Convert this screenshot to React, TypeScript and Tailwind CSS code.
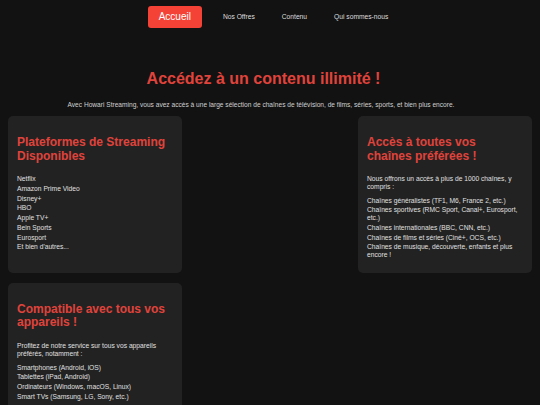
import React from 'react';

const platforms = [
  'Netflix',
  'Amazon Prime Video',
  'Disney+',
  'HBO',
  'Apple TV+',
  'Bein Sports',
  'Eurosport',
  "Et bien d'autres...",
];

const channels = [
  'Chaînes généralistes (TF1, M6, France 2, etc.)',
  'Chaînes sportives (RMC Sport, Canal+, Eurosport, etc.)',
  'Chaînes internationales (BBC, CNN, etc.)',
  'Chaînes de films et séries (Ciné+, OCS, etc.)',
  'Chaînes de musique, découverte, enfants et plus encore !',
];

const devices = [
  'Smartphones (Android, iOS)',
  'Tablettes (iPad, Android)',
  'Ordinateurs (Windows, macOS, Linux)',
  'Smart TVs (Samsung, LG, Sony, etc.)',
];

const Card: React.FC<{ title: string; intro?: string; items: string[]; className?: string }> = ({
  title,
  intro,
  items,
  className = '',
}) => (
  <section className={`bg-[#222222] rounded-[5px] px-[9px] pt-[20px] pb-[14px] ${className}`}>
    <h2 className="text-[12px] leading-[13.8px] font-bold text-[#e0433b] mb-[12px]">{title}</h2>
    {intro && <p className="text-[6.7px] leading-[7.7px] text-[#e0e0e0] mb-[6px]">{intro}</p>}
    <ul className="list-none flex flex-col gap-[2px] text-[6.7px] leading-[7.7px] text-[#e0e0e0]">
      {items.map((item) => (
        <li key={item}>{item}</li>
      ))}
    </ul>
  </section>
);

export default function App() {
  return (
    <div className="min-h-screen bg-[#121212] font-['Liberation_Sans',Arial,sans-serif] text-[#dddddd]">
      <nav className="flex justify-center items-center pt-[6px] pr-[4px]">
        <a className="bg-[#f44336] text-white text-[10px] leading-[11.5px] px-[11px] py-[5.25px] rounded-[3px]">
          Accueil
        </a>
        <div className="ml-[21px] flex gap-[27px] text-[6.7px] leading-[8px] text-[#dddddd]">
          <a>Nos Offres</a>
          <a>Contenu</a>
          <a>Qui sommes-nous</a>
        </div>
      </nav>

      <h1 className="mt-[42px] pr-[13px] text-center text-[16px] leading-[18px] font-bold text-[#e0433b]">
        Accédez à un contenu illimité !
      </h1>
      <p className="mt-[13px] pr-[18px] text-center text-[6.6px] leading-[7.7px] text-[#d0d0d0]">
        Avec Howari Streaming, vous avez accès à une large sélection de chaînes de télévision, de films, séries, sports, et bien plus encore.
      </p>

      <main className="mt-[7px] px-[8px] grid grid-cols-[174px_1fr_174px] gap-y-[10px] pb-[10px]">
        <Card className="col-start-1 row-start-1" title="Plateformes de Streaming Disponibles" items={platforms} />
        <Card
          className="col-start-3 row-start-1"
          title="Accès à toutes vos chaînes préférées !"
          intro="Nous offrons un accès à plus de 1000 chaînes, y compris :"
          items={channels}
        />
        <Card
          className="col-start-1 row-start-2"
          title="Compatible avec tous vos appareils !"
          intro="Profitez de notre service sur tous vos appareils préférés, notamment :"
          items={devices}
        />
      </main>
    </div>
  );
}
